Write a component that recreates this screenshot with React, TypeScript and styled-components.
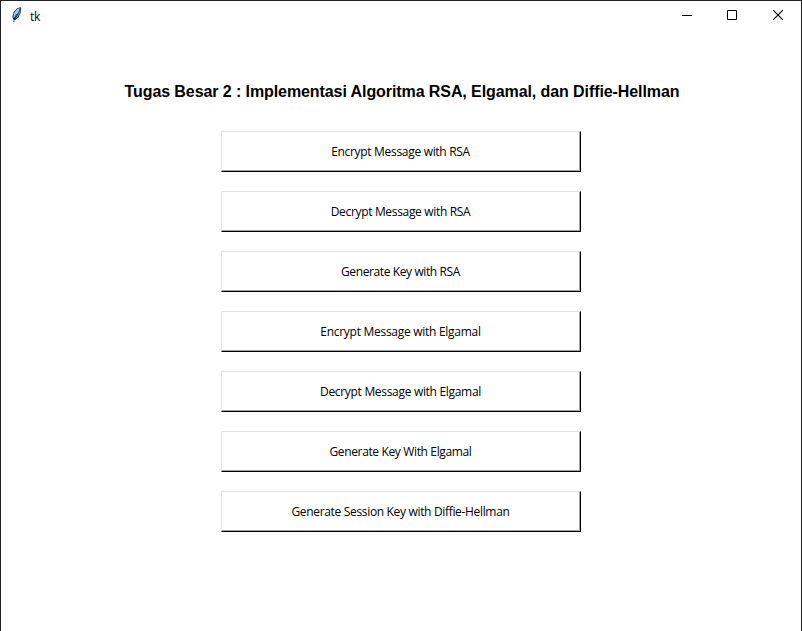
import React from "react";
import styled, { createGlobalStyle } from "styled-components";

const GlobalStyle = createGlobalStyle`
  * { box-sizing: border-box; }
  body { margin: 0; background: #fff; overflow: hidden; }
`;

const Window = styled.div`
  width: 802px;
  height: 631px;
  display: flex;
  flex-direction: column;
  background: #fff;
  border: 1px solid #222224;
  border-bottom: 0;
  color: #000;
  font-family: "Open Sans", "Noto Sans", sans-serif;
  font-size: 12px;
`;

const TitleBar = styled.header`
  display: flex;
  align-items: center;
  height: 30px;
  padding-left: 8px;
`;

const WindowTitle = styled.span`
  flex: 1;
  margin-left: 5px;
  padding-top: 1px;
  line-height: 17px;
  letter-spacing: -0.2px;
`;

const WindowControl = styled.button<{ $width: number }>`
  display: flex;
  align-items: center;
  justify-content: center;
  width: ${(p) => p.$width}px;
  height: 28px;
  margin-bottom: 2px;
  padding: 0;
  border: 0;
  background: transparent;
`;

const Content = styled.main`
  display: flex;
  flex-direction: column;
  align-items: center;
  padding-top: 50px;
`;

const Heading = styled.h1`
  margin: 0 0 29px;
  padding-left: 2px;
  font: bold 16px/21px "Liberation Sans", Arial, sans-serif;
  letter-spacing: -0.085px;
  white-space: nowrap;
`;

const Menu = styled.div`
  display: flex;
  flex-direction: column;
  gap: 19px;
`;

const MenuButton = styled.button<{ $tracking: number }>`
  width: 360px;
  height: 41px;
  padding: 1px 1px 0 0;
  border: 1px solid;
  border-color: #e3e3e3 #000 #000 #e3e3e3;
  box-shadow: inset -1px -1px 0 #a0a0a0;
  background: #fff;
  color: #000;
  font: 12px/16px "Open Sans", "Noto Sans", sans-serif;
  letter-spacing: ${(p) => p.$tracking}px;
`;

const actions = [
  { label: "Encrypt Message with RSA", tracking: -0.31 },
  { label: "Decrypt Message with RSA", tracking: -0.33 },
  { label: "Generate Key with RSA", tracking: -0.39 },
  { label: "Encrypt Message with Elgamal", tracking: -0.28 },
  { label: "Decrypt Message with Elgamal", tracking: -0.31 },
  { label: "Generate Key With Elgamal", tracking: -0.36 },
  { label: "Generate Session Key with Diffie-Hellman", tracking: -0.33 },
];

const FeatherIcon = () => (
  <svg width="16" height="18" viewBox="0 0 16 18">
    <path d="M4 12.5 3.4 9.5 4.6 5.2 7.8 1.5 11.6 0 12.2 2 11.6 6 9.4 10.4 6.4 13Z" fill="#26323e" />
    <path d="M4.3 11 5.1 6 8 2.3 10.9 1 9.8 4.6 6.4 10Z" fill="#9bc8f6" />
    <path d="M6.3 11.6 9.2 7 11.4 1.8 10.9 6.2 8.8 10Z" fill="#4583d2" />
    <path d="M7.6 7 6.2 9.8 5.4 12 4.8 15" fill="none" stroke="#14202e" strokeWidth="0.8" />
  </svg>
);

export default function App() {
  return (
    <>
      <GlobalStyle />
      <Window>
        <TitleBar>
          <FeatherIcon />
          <WindowTitle>tk</WindowTitle>
          <WindowControl $width={44} aria-label="Minimize">
            <svg width="10" height="10"><path d="M0 5.5H10" stroke="#000" /></svg>
          </WindowControl>
          <WindowControl $width={46} aria-label="Maximize">
            <svg width="10" height="10"><path d="M.5 .5H9.5V9.5H.5Z" fill="none" stroke="#000" /></svg>
          </WindowControl>
          <WindowControl $width={46} aria-label="Close">
            <svg width="10" height="10"><path d="M0 0 10 10M10 0 0 10" stroke="#000" strokeWidth="1.1" /></svg>
          </WindowControl>
        </TitleBar>
        <Content>
          <Heading>Tugas Besar 2 : Implementasi Algoritma RSA, Elgamal, dan Diffie-Hellman</Heading>
          <Menu>
            {actions.map((a) => (
              <MenuButton key={a.label} $tracking={a.tracking}>{a.label}</MenuButton>
            ))}
          </Menu>
        </Content>
      </Window>
    </>
  );
}
